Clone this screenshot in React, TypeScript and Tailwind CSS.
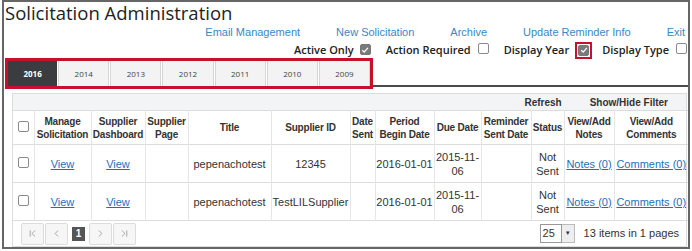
import { ChevronFirst, ChevronLast, ChevronLeft, ChevronRight } from "lucide-react";

const years = ["2016", "2014", "2013", "2012", "2011", "2010", "2009"];
const cols = [21, 57, 54, 43, 83, 79, 25, 59, 47, 50, 33, 50, 74];
const heads = [
  "",
  "Manage Solicitation",
  "Supplier Dashboard",
  "Supplier Page",
  "Title",
  "Supplier ID",
  "Date Sent",
  "Period Begin Date",
  "Due Date",
  "Reminder Sent Date",
  "Status",
  "View/Add Notes",
  "View/Add Comments",
];
const rows = [
  { title: "pepenachotest", id: "12345" },
  { title: "pepenachotest", id: "TestLILSupplier" },
];

function Check({ checked, red }: { checked?: boolean; red?: boolean }) {
  const box = (
    <span
      className={
        "inline-flex h-[11px] w-[11px] items-center justify-center rounded-[2px] border " +
        (checked ? "border-[#777] bg-[#7a7a7a]" : "border-[#8a8a8a] bg-white")
      }
    >
      {checked && (
        <svg viewBox="0 0 10 10" className="h-[8px] w-[8px]">
          <path d="M1.5 5.2 4 7.6 8.6 2.4" fill="none" stroke="#fff" strokeWidth="1.6" />
        </svg>
      )}
    </span>
  );
  if (!red) return box;
  return <span className="inline-flex border-2 border-[#c8102e] p-[1px]">{box}</span>;
}

function PagerBtn({ children }: { children: React.ReactNode }) {
  return (
    <span className="flex h-[22px] w-[23px] items-center justify-center rounded-[2px] border border-[#dcdcdc] bg-[#f6f6f6] text-[#8a8a8a]">
      {children}
    </span>
  );
}

export default function App() {
  return (
    <div className="h-[251px] w-[692px] bg-white font-['Liberation_Sans',Arial,sans-serif] text-[#333]">
      <div className="ml-[2px] flex h-[249px] w-[688px] flex-col border-2 border-[#666] bg-white">
        <h1 className="h-[22px] pl-[1px] font-['Open_Sans',sans-serif] text-[18.5px] leading-[22px] text-[#222]">
          Solicitation Administration
        </h1>

        <nav className="mt-[1px] flex h-[14px] items-center justify-end gap-[36px] pr-[3px] text-[11px] text-[#3a87c6]">
          <a>Email Management</a>
          <a>New Solicitation</a>
          <a>Archive</a>
          <a>Update Reminder Info</a>
          <a>Exit</a>
        </nav>

        <div className="mt-[3px] flex h-[16px] items-center justify-end pr-[1px] font-['Open_Sans',sans-serif] text-[11px] font-semibold text-[#222]">
          <span>Active Only</span>
          <span className="ml-[6px]"><Check checked /></span>
          <span className="ml-[15px]">Action Required</span>
          <span className="ml-[7px]"><Check /></span>
          <span className="ml-[15px]">Display Year</span>
          <span className="ml-[6px]"><Check checked red /></span>
          <span className="ml-[10px]">Display Type</span>
          <span className="ml-[7px]"><Check /></span>
        </div>

        <div className="flex items-end">
          <div className="ml-[1px] flex h-[31px] w-[368px] gap-[1px] border-[3px] border-[#c8102e] font-['Open_Sans',sans-serif] text-[8px]">
            {years.map((y, i) => (
              <span
                key={y}
                className={
                  "flex flex-1 items-center justify-center " +
                  (i === 0
                    ? "bg-[#3b3c40] font-bold text-white"
                    : "border-x border-[#d6d6d6] bg-[#f3f3f4] text-[#444]")
                }
              >
                {y}
              </span>
            ))}
          </div>
          <div className="mb-[2px] h-[2px] flex-1 bg-[#4a4a4a]" />
        </div>

        <div className="ml-[8px] mt-[4px] flex w-[675px] flex-1 flex-col border border-[#dcdcdc]">
          <div className="flex h-[16px] items-center justify-end gap-[28px] bg-[#f3f4f5] pr-[18px] text-[10px] font-bold text-[#333]">
            <span>Refresh</span>
            <span>Show/Hide Filter</span>
          </div>

          <table className="w-[673px] table-fixed border-collapse text-[11px]">
            <colgroup>
              {cols.map((w, i) => (
                <col key={i} style={{ width: w }} />
              ))}
            </colgroup>
            <thead>
              <tr className="h-[34px] border-y border-[#dcdcdc]">
                {heads.map((h, i) => (
                  <th
                    key={i}
                    className={
                      "px-0 text-center align-middle text-[10px] font-bold leading-[13px] tracking-[-0.2px] text-[#333] " +
                      (i > 0 ? "border-l border-[#e6e6e6]" : "")
                    }
                  >
                    {i === 0 ? <Check /> : h}
                  </th>
                ))}
              </tr>
            </thead>
            <tbody>
              {rows.map((r, ri) => (
                <tr key={ri} className="h-[38px] border-b border-[#dcdcdc] text-center leading-[14px]">
                  <td>
                    <Check />
                  </td>
                  <td className="border-l border-[#e6e6e6]">
                    <a className="text-[#1f6fb8] underline">View</a>
                  </td>
                  <td className="border-l border-[#e6e6e6]">
                    <a className="text-[#1f6fb8] underline">View</a>
                  </td>
                  <td className="border-l border-[#e6e6e6]" />
                  <td className="border-l border-[#e6e6e6]">{r.title}</td>
                  <td className="overflow-hidden whitespace-nowrap border-l border-[#e6e6e6]">{r.id}</td>
                  <td className="border-l border-[#e6e6e6]" />
                  <td className="border-l border-[#e6e6e6]">2016-01-01</td>
                  <td className="border-l border-[#e6e6e6]">
                    2015-11-
                    <br />
                    06
                  </td>
                  <td className="border-l border-[#e6e6e6]" />
                  <td className="border-l border-[#e6e6e6]">
                    Not
                    <br />
                    Sent
                  </td>
                  <td className="border-l border-[#e6e6e6]">
                    <a className="text-[#1f6fb8] underline">Notes (0)</a>
                  </td>
                  <td className="whitespace-nowrap border-l border-[#e6e6e6]">
                    <a className="text-[#1f6fb8] underline">Comments (0)</a>
                  </td>
                </tr>
              ))}
            </tbody>
          </table>

          <div className="flex flex-1 items-center pl-[8px] pr-[7px]">
            <div className="flex items-center gap-[1px]">
              <PagerBtn><ChevronFirst size={11} strokeWidth={1.6} /></PagerBtn>
              <PagerBtn><ChevronLeft size={11} strokeWidth={1.6} /></PagerBtn>
              <span className="mx-[3px] flex h-[14px] w-[13px] items-center justify-center bg-[#555] text-[10px] font-bold text-white">
                1
              </span>
              <PagerBtn><ChevronRight size={11} strokeWidth={1.6} /></PagerBtn>
              <PagerBtn><ChevronLast size={11} strokeWidth={1.6} /></PagerBtn>
            </div>
            <div className="ml-auto flex items-center">
              <span className="flex h-[19px] w-[22px] items-center border border-[#999] bg-white pl-[2px] text-[11px]">25</span>
              <span className="flex h-[19px] w-[13px] items-center justify-center border border-l-0 border-[#bbb] bg-[#eee] text-[6px] text-[#333]">
                ▼
              </span>
              <span className="ml-[9px] text-[11px] text-[#333]">13 items in 1 pages</span>
            </div>
          </div>
        </div>
      </div>
    </div>
  );
}
